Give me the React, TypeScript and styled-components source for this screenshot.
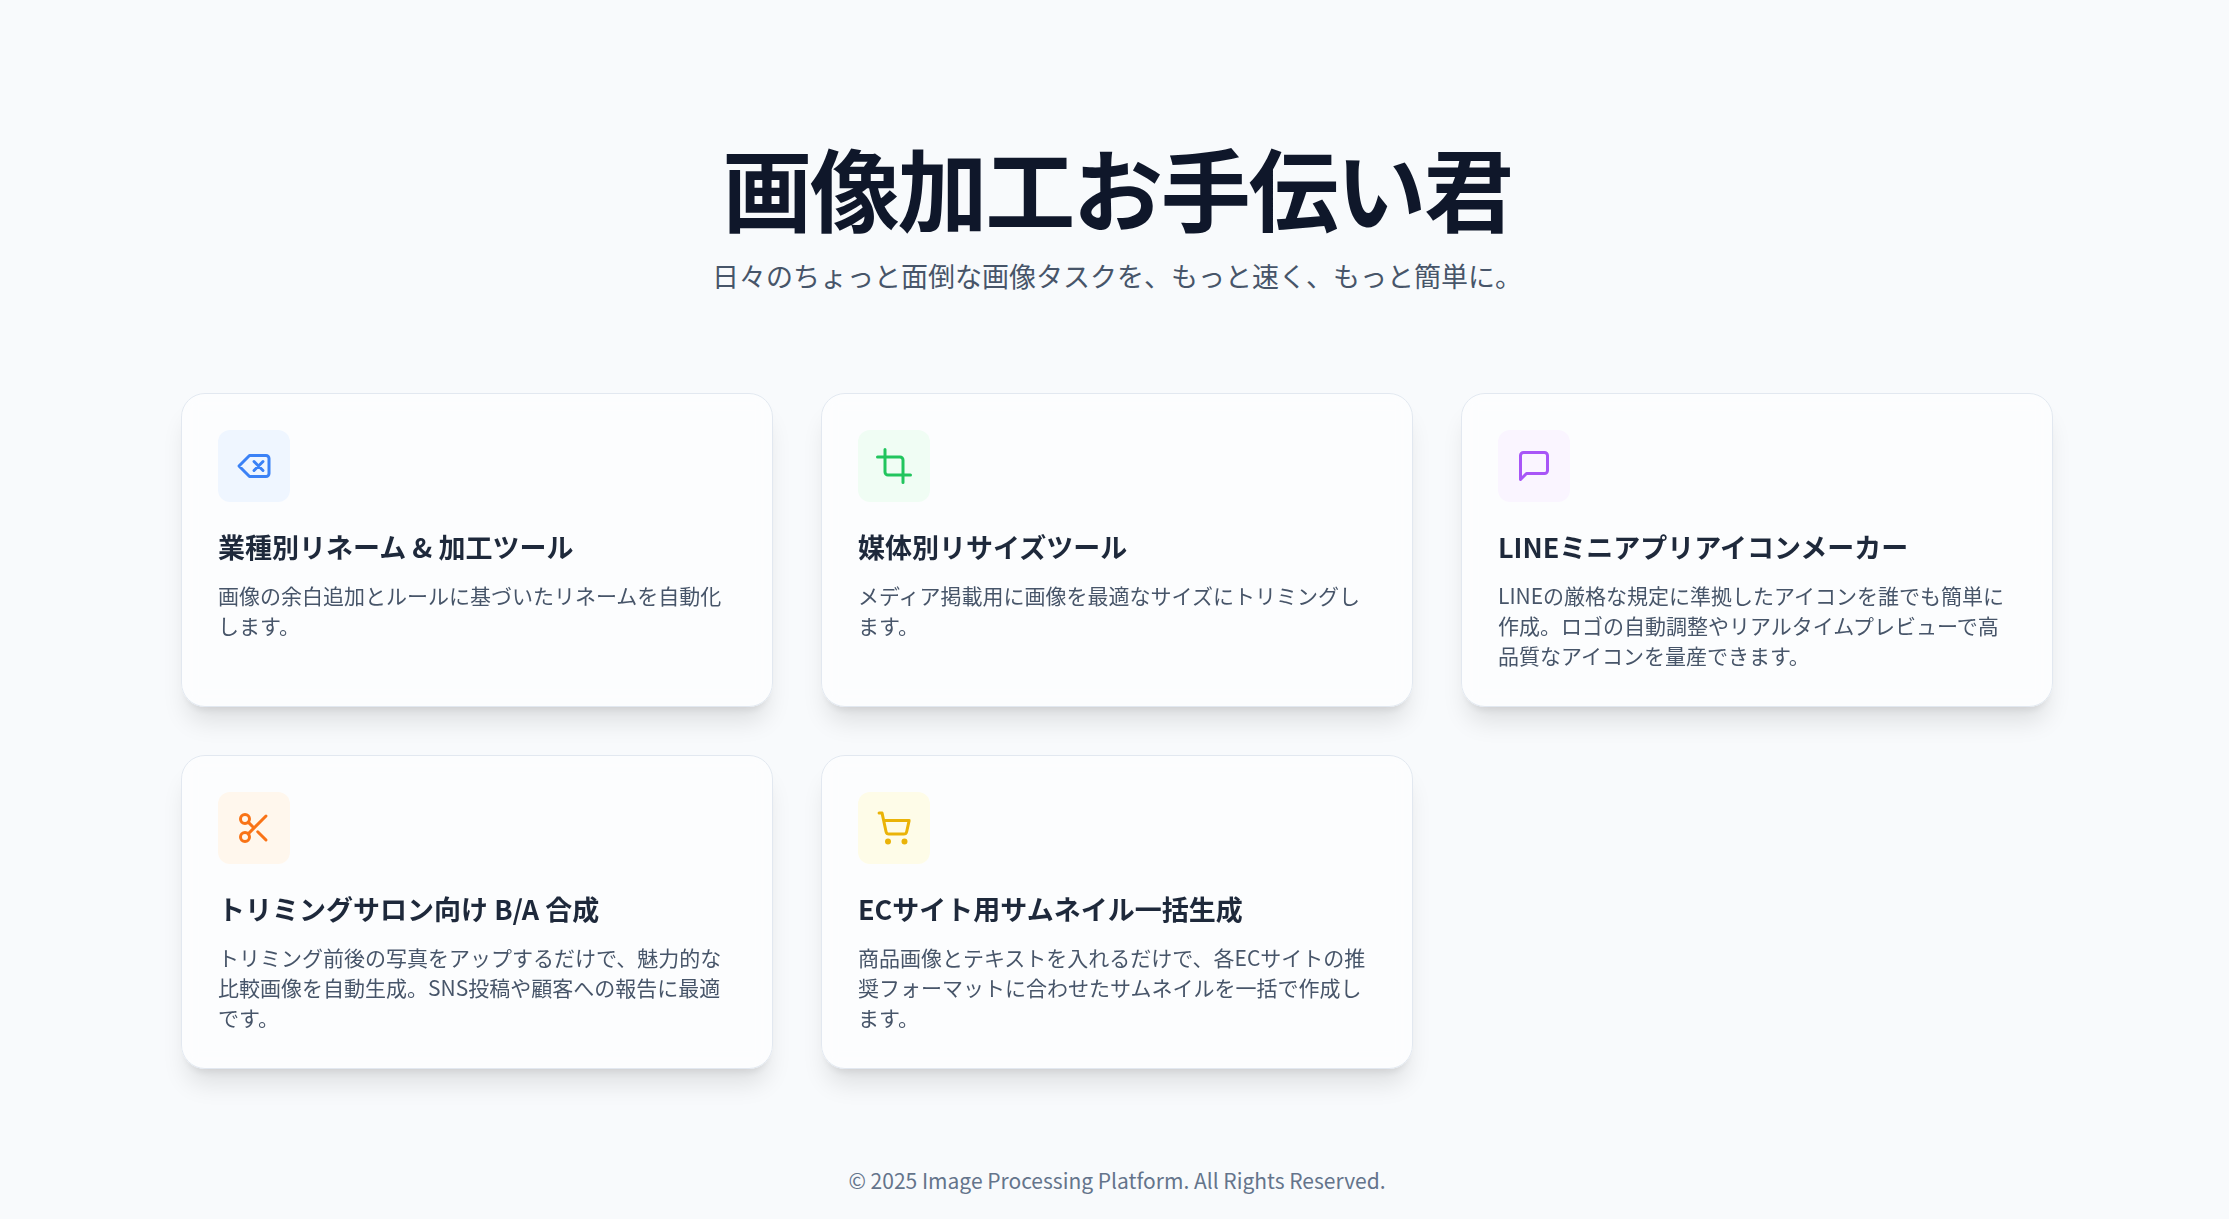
import type { ReactNode } from "react";
import styled, { createGlobalStyle } from "styled-components";

const GlobalStyle = createGlobalStyle`
  *, *::before, *::after { box-sizing: border-box; }
  body {
    margin: 0;
    background: #f8fafc;
    color: #1e293b;
    font-family: "Noto Sans CJK JP", sans-serif;
  }
  h1, h2, p { margin: 0; }
`;

const Page = styled.div`
  min-height: 100vh;
  padding: 0 0 24px 5px;
`;

const Container = styled.div`
  max-width: 1920px;
  margin: 0 auto;
  padding: 141px 24px 0;
`;

const Header = styled.header`
  text-align: center;
  margin-bottom: 96px;
`;

const Heading = styled.h1`
  margin-bottom: 24px;
  color: #0f172a;
  font-size: 90px;
  font-weight: 700;
  line-height: 90px;
  letter-spacing: -0.025em;
`;

const Lead = styled.p`
  color: #475569;
  font-size: 27px;
  line-height: 42px;
`;

const Grid = styled.main`
  display: grid;
  grid-template-columns: repeat(3, minmax(0, 1fr));
  gap: 48px;

  @media (max-width: 1536px) {
    grid-template-columns: repeat(2, minmax(0, 1fr));
  }

  @media (max-width: 960px) {
    grid-template-columns: minmax(0, 1fr);
  }
`;

const Card = styled.a`
  display: flex;
  flex-direction: column;
  padding: 36px;
  border: 1px solid #e2e8f0;
  border-radius: 24px;
  background: rgba(255, 255, 255, 0.6);
  backdrop-filter: blur(8px);
  box-shadow: 0 20px 25px -5px rgba(0, 0, 0, 0.1), 0 8px 10px -6px rgba(0, 0, 0, 0.1);
  color: inherit;
  text-decoration: none;
`;

const IconBox = styled.span<{ $bg: string; $fg: string }>`
  display: flex;
  align-items: center;
  justify-content: center;
  width: 72px;
  height: 72px;
  margin-bottom: 24px;
  border-radius: 12px;
  background: ${(p) => p.$bg};
  color: ${(p) => p.$fg};
`;

const Icon = styled.svg`
  width: 36px;
  height: 36px;
  fill: none;
  stroke: currentColor;
  stroke-width: 2;
  stroke-linecap: round;
  stroke-linejoin: round;
`;

const CardTitle = styled.h2`
  margin-bottom: 12px;
  color: #1e293b;
  font-size: 27px;
  font-weight: 700;
  line-height: 42px;
`;

const CardText = styled.p`
  color: #475569;
  font-size: 21px;
  line-height: 30px;
`;

const Footer = styled.footer`
  margin-top: 96px;
  color: #64748b;
  font-size: 21px;
  line-height: 30px;
  text-align: center;
`;

type Tool = { title: string; text: string; bg: string; fg: string; icon: ReactNode };

const tools: Tool[] = [
  {
    title: "業種別リネーム & 加工ツール",
    text: "画像の余白追加とルールに基づいたリネームを自動化します。",
    bg: "#eff6ff",
    fg: "#3b82f6",
    icon: <path d="M20 5H9l-7 7 7 7h11a2 2 0 0 0 2-2V7a2 2 0 0 0-2-2ZM12 9l6 6M18 9l-6 6" />,
  },
  {
    title: "媒体別リサイズツール",
    text: "メディア掲載用に画像を最適なサイズにトリミングします。",
    bg: "#f0fdf4",
    fg: "#22c55e",
    icon: <path d="M6 1v15a2 2 0 0 0 2 2h15M1 6h15a2 2 0 0 1 2 2v15" />,
  },
  {
    title: "LINEミニアプリアイコンメーカー",
    text: "LINEの厳格な規定に準拠したアイコンを誰でも簡単に作成。ロゴの自動調整やリアルタイムプレビューで高品質なアイコンを量産できます。",
    bg: "#faf5ff",
    fg: "#a855f7",
    icon: <path d="M21 15a2 2 0 0 1-2 2H7l-4 4V5a2 2 0 0 1 2-2h14a2 2 0 0 1 2 2z" />,
  },
  {
    title: "トリミングサロン向け B/A 合成",
    text: "トリミング前後の写真をアップするだけで、魅力的な比較画像を自動生成。SNS投稿や顧客への報告に最適です。",
    bg: "#fff7ed",
    fg: "#f97316",
    icon: (
      <>
        <circle cx="6" cy="6" r="3" />
        <circle cx="6" cy="18" r="3" />
        <path d="M20 4L8.12 15.88M14.47 14.48L20 20M8.12 8.12L12 12" />
      </>
    ),
  },
  {
    title: "ECサイト用サムネイル一括生成",
    text: "商品画像とテキストを入れるだけで、各ECサイトの推奨フォーマットに合わせたサムネイルを一括で作成します。",
    bg: "#fefce8",
    fg: "#eab308",
    icon: (
      <>
        <circle cx="8" cy="21" r="1" />
        <circle cx="19" cy="21" r="1" />
        <path d="M2.05 2.05h2l2.66 12.42a2 2 0 0 0 2 1.58h9.78a2 2 0 0 0 1.95-1.57l1.65-7.43H5.12" />
      </>
    ),
  },
];

export default function App() {
  return (
    <Page>
      <GlobalStyle />
      <Container lang="ja">
        <Header>
          <Heading>画像加工お手伝い君</Heading>
          <Lead>日々のちょっと面倒な画像タスクを、もっと速く、もっと簡単に。</Lead>
        </Header>
        <Grid>
          {tools.map((tool) => (
            <Card key={tool.title} href="#">
              <IconBox $bg={tool.bg} $fg={tool.fg}>
                <Icon viewBox="0 0 24 24" aria-hidden="true">
                  {tool.icon}
                </Icon>
              </IconBox>
              <CardTitle>{tool.title}</CardTitle>
              <CardText>{tool.text}</CardText>
            </Card>
          ))}
        </Grid>
        <Footer>© 2025 Image Processing Platform. All Rights Reserved.</Footer>
      </Container>
    </Page>
  );
}
